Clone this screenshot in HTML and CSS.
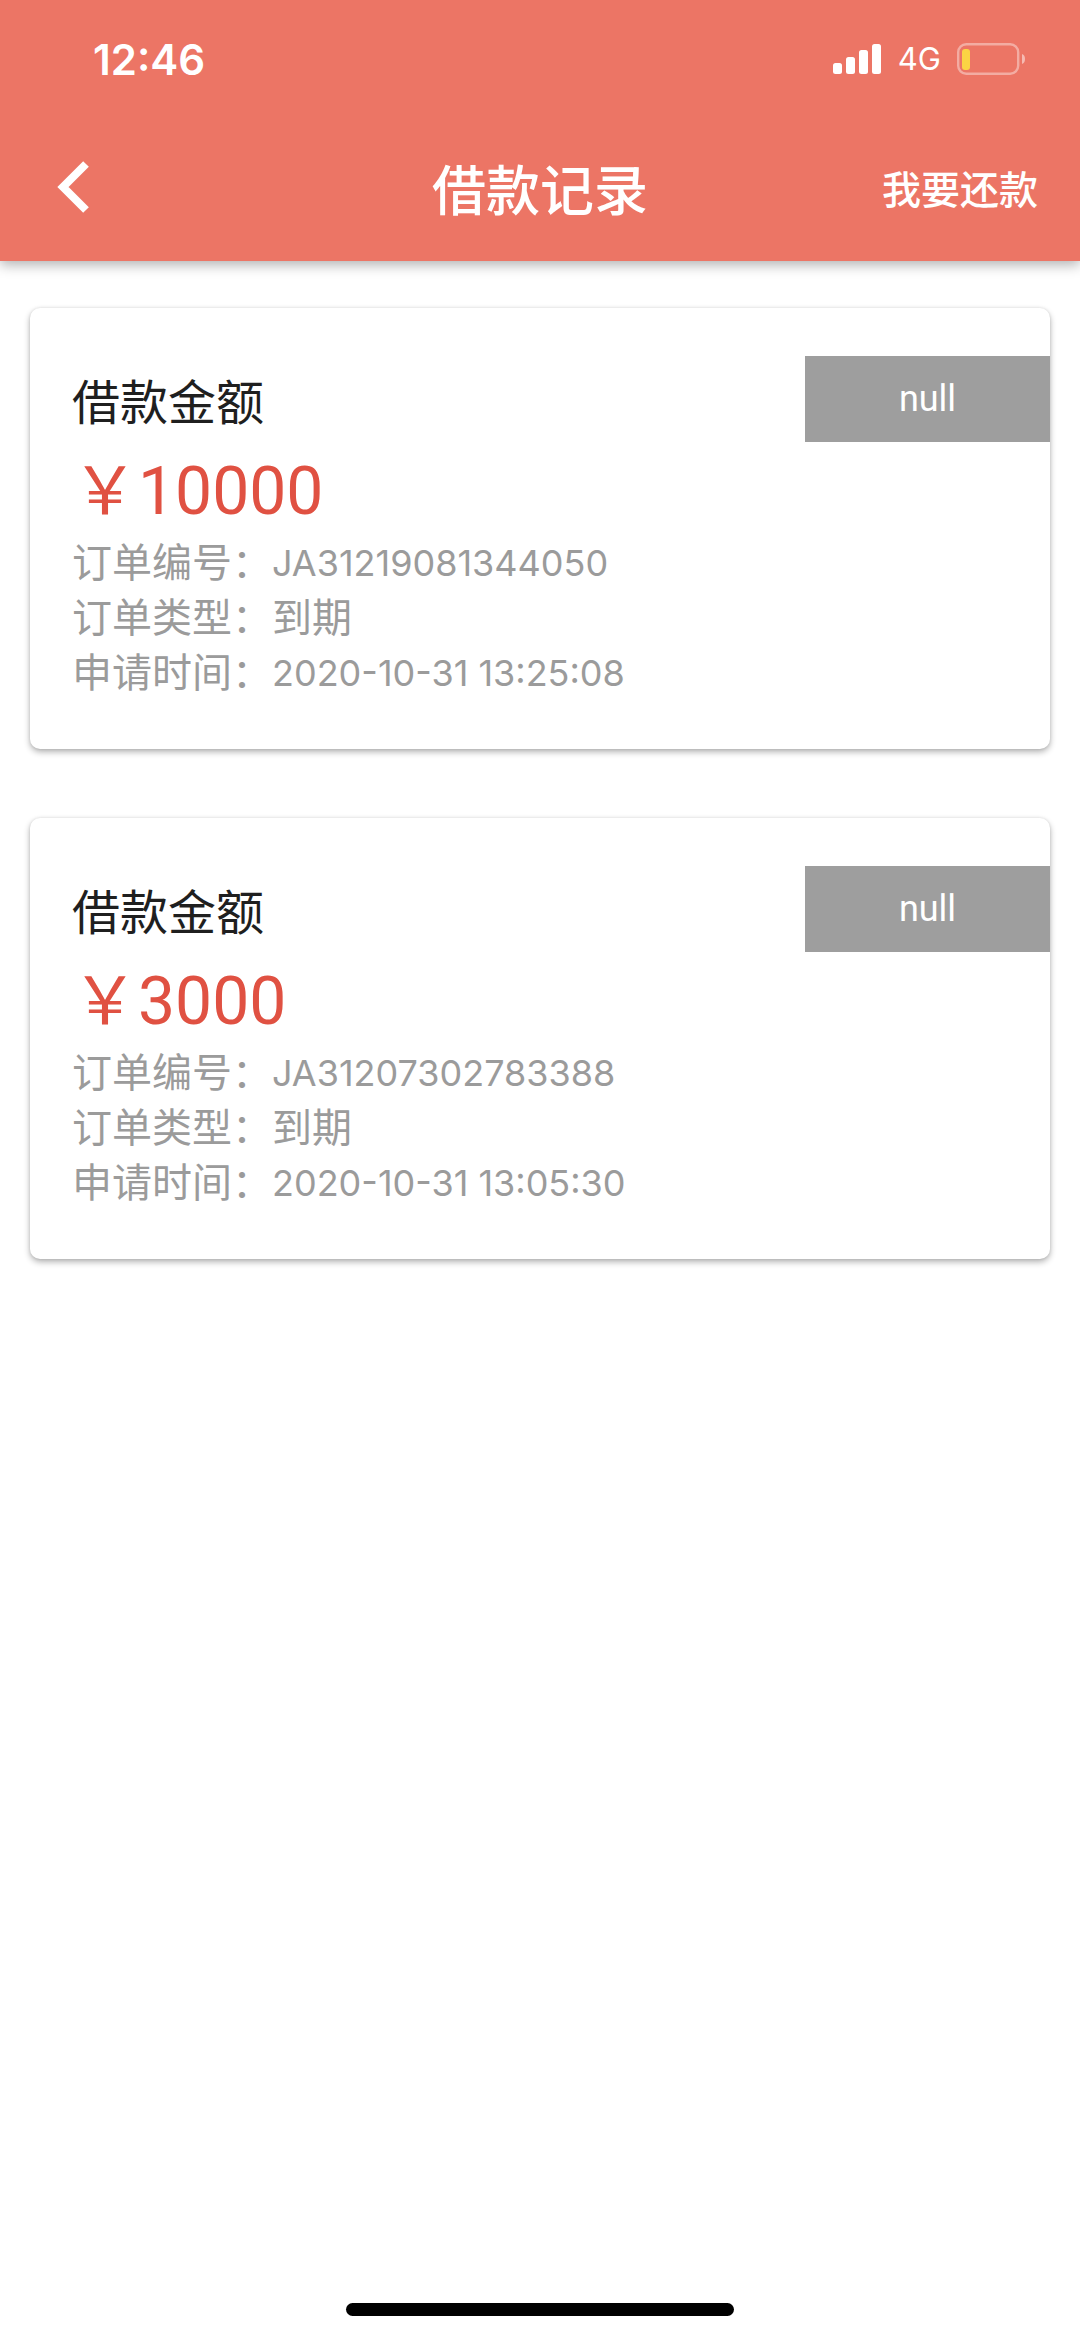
FILE: index.html
```html
<!DOCTYPE html>
<html lang="zh-CN">
<head>
    <meta charset="UTF-8">
    <meta name="viewport" content="width=device-width, initial-scale=1.0">
    <title>借款记录</title>
    <link rel="stylesheet" href="styles.css">
</head>
<body>
    <div class="page">
        <header class="header">
            <div class="status">
                <span class="clock">12:46</span>
                <div class="status-right">
                    <svg class="signal" width="50" height="32" viewBox="0 0 50 32" fill="#fff" aria-hidden="true">
                        <rect x="1" y="20" width="9" height="11" rx="2.5"/>
                        <rect x="14" y="14" width="9" height="17" rx="2.5"/>
                        <rect x="27" y="7" width="9" height="24" rx="2.5"/>
                        <rect x="40" y="1" width="9" height="30" rx="2.5"/>
                    </svg>
                    <span class="network">4G</span>
                    <svg class="battery" width="68" height="32" viewBox="0 0 68 32" aria-hidden="true">
                        <rect x="1.2" y="1.2" width="60" height="29.6" rx="8" fill="none" stroke="#fff" stroke-opacity=".4" stroke-width="2.4"/>
                        <path d="M65 11c4 1 4 9 0 10z" fill="#fff" fill-opacity=".5"/>
                        <rect x="5" y="6" width="8" height="21" rx="3" fill="#fbd444"/>
                    </svg>
                </div>
            </div>
            <nav class="nav">
                <button class="back" type="button" aria-label="返回">
                    <svg width="34" height="54" viewBox="0 0 34 54" fill="none" stroke="#fff" stroke-width="8" aria-hidden="true">
                        <path d="M30 4L7 27l23 23"/>
                    </svg>
                </button>
                <h1 class="title">借款记录</h1>
                <a class="repay" href="#">我要还款</a>
            </nav>
        </header>
        <main class="list">
            <section class="card">
                <div class="card-top">
                    <h2 class="card-title">借款金额</h2>
                    <span class="badge">null</span>
                </div>
                <div class="price">￥10000</div>
                <dl class="info">
                    <dt>订单编号：</dt><dd class="num">JA31219081344050</dd>
                    <dt>订单类型：</dt><dd>到期</dd>
                    <dt>申请时间：</dt><dd class="num">2020-10-31 13:25:08</dd>
                </dl>
            </section>
            <section class="card">
                <div class="card-top">
                    <h2 class="card-title">借款金额</h2>
                    <span class="badge">null</span>
                </div>
                <div class="price">￥3000</div>
                <dl class="info">
                    <dt>订单编号：</dt><dd class="num">JA31207302783388</dd>
                    <dt>订单类型：</dt><dd>到期</dd>
                    <dt>申请时间：</dt><dd class="num">2020-10-31 13:05:30</dd>
                </dl>
            </section>
        </main>
        <div class="home-bar"></div>
    </div>
</body>
</html>
```
FILE: styles.css
```css
* {
    box-sizing: border-box;
    margin: 0;
    padding: 0;
}
body {
    background-color: #fff;
    font-family: Roboto, "Noto Sans CJK SC", sans-serif;
    color: #1f1f1f;
}
.page {
    display: flex;
    flex-direction: column;
    min-height: 100vh;
}
.header {
    background-color: #ec7565;
    color: #fff;
    box-shadow: 0 4px 12px rgba(0, 0, 0, .3);
}
.status {
    display: flex;
    align-items: center;
    justify-content: space-between;
    height: 118px;
    padding: 0 55px 0 93px;
    font-family: Inter, sans-serif;
}
.clock {
    font-size: 42px;
    font-weight: 600;
}
.status-right {
    display: flex;
    align-items: center;
    gap: 16px;
}
.network {
    font-size: 31px;
    line-height: 36px;
}
.nav {
    display: grid;
    grid-template-columns: 1fr auto 1fr;
    align-items: center;
    height: 143px;
    padding: 0 42px 5px;
}
.back {
    justify-self: start;
    display: flex;
    padding-left: 14px;
    border: none;
    background: none;
    cursor: pointer;
}
.title {
    font-size: 54px;
    font-weight: 500;
}
.repay {
    justify-self: end;
    font-size: 39px;
    font-weight: 500;
    color: #fff;
    text-decoration: none;
}
.list {
    flex: 1;
    display: flex;
    flex-direction: column;
    gap: 69px;
    padding: 47px 30px;
}
.card {
    padding: 48px 0;
    border-radius: 10px;
    background-color: #fff;
    box-shadow: 0 3px 6px rgba(0, 0, 0, .3), 0 0 3px rgba(0, 0, 0, .1);
}
.card-top {
    display: flex;
    align-items: center;
    justify-content: space-between;
    padding-left: 42px;
}
.card-title {
    font-size: 48px;
    font-weight: 400;
}
.badge {
    width: 24%;
    min-width: 245px;
    line-height: 86px;
    background-color: #9e9e9e;
    color: #fff;
    font-size: 36px;
    text-align: center;
}
.price {
    padding: 6px 0 0 42px;
    font-size: 66px;
    line-height: 88px;
    color: #e05142;
}
.info {
    display: grid;
    grid-template-columns: auto 1fr;
    padding-left: 42px;
    font-size: 40px;
    line-height: 55px;
    color: #9b9b9b;
}
.info .num {
    font-family: Inter, sans-serif;
    font-size: 36px;
}
.home-bar {
    align-self: center;
    width: 36%;
    height: 13px;
    margin-bottom: 21px;
    border-radius: 7px;
    background-color: #000;
}
```
